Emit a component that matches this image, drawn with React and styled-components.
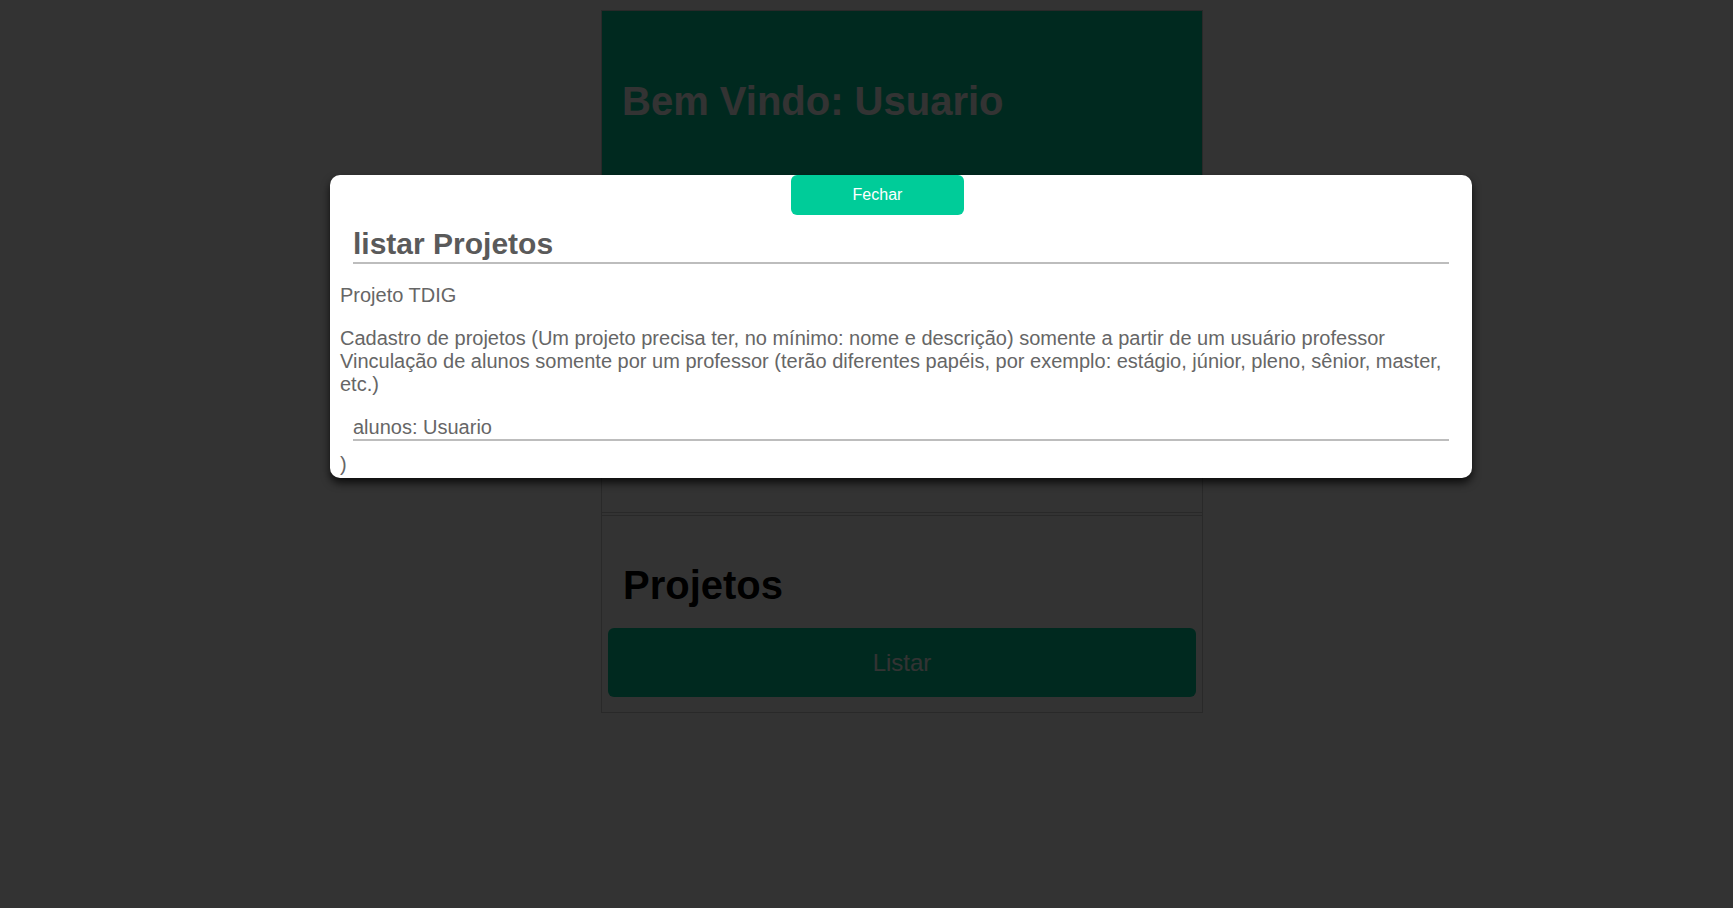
import React from "react";
import styled, { createGlobalStyle } from "styled-components";

const GlobalStyle = createGlobalStyle`
  html, body {
    margin: 0;
    padding: 0;
    background: #ffffff;
    overflow: hidden;
    font-family: "Liberation Sans", Arial, sans-serif;
  }
`;

const Page = styled.div`
  position: relative;
  width: 1802px;
  height: 100vh;
  display: flex;
  flex-direction: column;
  align-items: center;
`;

const Container = styled.div`
  width: 600px;
  margin: 10px 0 0 2px;
  border: 1px solid #cccccc;
`;

const Header = styled.header`
  background: #00cc99;
  padding: 40px 20px;
`;

const Welcome = styled.h1`
  margin: 27px 0;
  font-size: 40px;
  line-height: 46px;
  color: #ffffff;
`;

const Panel = styled.section`
  border-bottom: ${(p) => (p.$last ? "none" : "1px solid #cccccc")};
  border-top: ${(p) => (p.$last ? "1px solid #cccccc" : "none")};
  margin-top: ${(p) => (p.$last ? "2px" : "0")};
  min-height: ${(p) => p.$minHeight || 0}px;
  padding: ${(p) => (p.$last ? "0 6px 15px" : "0")};
`;

const PanelTitle = styled.h1`
  margin: 46px 15px 20px;
  font-size: 40px;
  line-height: 46px;
  color: #000000;
`;

const ListButton = styled.button`
  display: block;
  width: 100%;
  height: 69px;
  border: none;
  border-radius: 6px;
  background: #00cc99;
  color: #ffffff;
  font-family: "Liberation Sans", Arial, sans-serif;
  font-size: 24px;
  cursor: pointer;
`;

const Overlay = styled.div`
  position: absolute;
  inset: 0;
  background: rgba(0, 0, 0, 0.8);
  display: flex;
  justify-content: center;
  align-items: flex-start;
  padding-top: 175px;
  box-sizing: border-box;
`;

const Modal = styled.div`
  width: 1142px;
  box-sizing: border-box;
  background: #ffffff;
  border-radius: 10px;
  padding: 0 10px 2px;
  box-shadow: 0 5px 8px rgba(0, 0, 0, 0.75);
  color: #666666;
  font-size: 20px;
  line-height: 23px;
`;

const CloseButton = styled.button`
  display: block;
  margin-left: 451px;
  width: 173px;
  height: 40px;
  border: none;
  border-radius: 6px;
  background: #00cc99;
  color: #ffffff;
  font-family: "Liberation Sans", Arial, sans-serif;
  font-size: 16px;
  cursor: pointer;
`;

const ModalTitle = styled.h2`
  margin: 12px 13px 0;
  font-size: 30px;
  line-height: 34.5px;
  color: #5a5a5a;
  border-bottom: 2px solid #bdbdbd;
`;

const Text = styled.p`
  margin: 20px 0;
`;

const Students = styled.div`
  margin: 0 13px;
  border-bottom: 2px solid #bdbdbd;
`;

const Closing = styled.div`
  margin-top: 12px;
`;

export default function App() {
  return (
    <>
      <GlobalStyle />
      <Page>
        <Container>
          <Header>
            <Welcome>Bem Vindo: Usuario</Welcome>
          </Header>
          <Panel $minHeight={321} />
          <Panel $last>
            <PanelTitle>Projetos</PanelTitle>
            <ListButton>Listar</ListButton>
          </Panel>
        </Container>
        <Overlay>
          <Modal>
            <CloseButton>Fechar</CloseButton>
            <ModalTitle>listar Projetos</ModalTitle>
            <Text>Projeto TDIG</Text>
            <Text>
              Cadastro de projetos (Um projeto precisa ter, no mínimo: nome e descrição) somente a partir de um usuário professor
              <br />
              Vinculação de alunos somente por um professor (terão diferentes papéis, por exemplo: estágio, júnior, pleno, sênior, master, etc.)
            </Text>
            <Students>alunos: Usuario</Students>
            <Closing>)</Closing>
          </Modal>
        </Overlay>
      </Page>
    </>
  );
}
